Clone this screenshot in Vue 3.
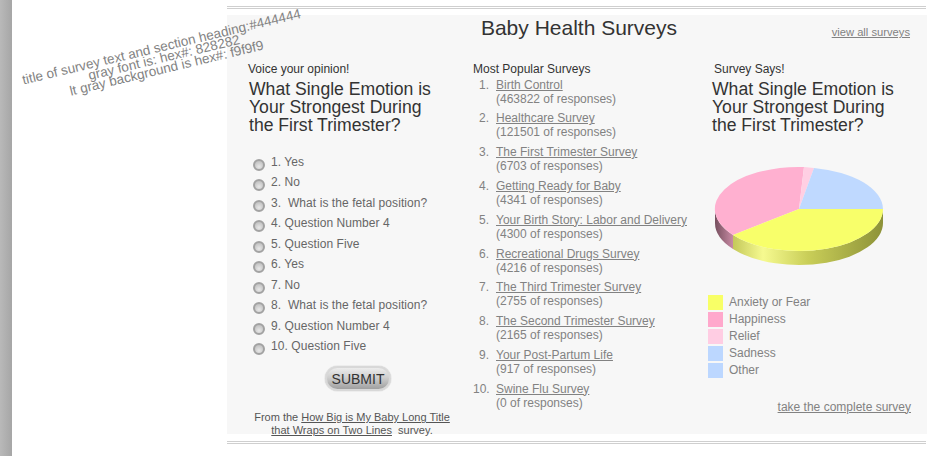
<script setup>
const questions = ['1. Yes', '2. No', '3. \u00a0What is the fetal position?', '4. Question Number 4', '5. Question Five', '6. Yes', '7. No', '8. \u00a0What is the fetal position?', '9. Question Number 4', '10. Question Five']
const surveys = [
  ['Birth Control', 463822], ['Healthcare Survey', 121501], ['The First Trimester Survey', 6703],
  ['Getting Ready for Baby', 4341], ['Your Birth Story: Labor and Delivery', 4300], ['Recreational Drugs Survey', 4216],
  ['The Third Trimester Survey', 2755], ['The Second Trimester Survey', 2165], ['Your Post-Partum Life', 917], ['Swine Flu Survey', 0]
]
const legend = [['Anxiety or Fear', '#f8ff66'], ['Happiness', '#ffa8cc'], ['Relief', '#ffcde3'], ['Sadness', '#bcd7ff'], ['Other', '#bcd7ff']]
</script>

<template>
  <div class="page">
    <div class="strip"></div>
    <div class="note">title of survey text and section heading:#444444<br>gray font is: hex#: 828282<br>lt gray background is hex#: f9f9f9</div>
    <div class="main">
      <div class="rule top"></div>
      <div class="panel">
        <header class="head">
          <h1>Baby Health Surveys</h1>
          <a class="all">view all surveys</a>
        </header>
        <div class="cols">
          <section class="vote">
            <p class="label">Voice your opinion!</p>
            <h2>What Single Emotion is Your Strongest During the First Trimester?</h2>
            <ul class="qs">
              <li v-for="q in questions" :key="q"><span class="radio"></span><span>{{ q }}</span></li>
            </ul>
            <button class="submit">SUBMIT</button>
            <p class="from">From the <a>How Big is My Baby Long Title<br>that Wraps on Two Lines</a>&nbsp; survey.</p>
          </section>
          <section class="popular">
            <p class="label">Most Popular Surveys</p>
            <ol>
              <li v-for="(s, i) in surveys" :key="s[0]">
                <span class="num">{{ i + 1 }}.</span>
                <div><a>{{ s[0] }}</a><br>({{ s[1] }} of responses)</div>
              </li>
            </ol>
          </section>
          <section class="says">
            <p class="label shift">Survey Says!</p>
            <h2>What Single Emotion is Your Strongest During the First Trimester?</h2>
            <svg class="pie" width="190" height="112" viewBox="708 160 190 112">
              <defs>
                <linearGradient id="wallY" x1="733" x2="883" y1="0" y2="0" gradientUnits="userSpaceOnUse">
                  <stop offset="0" stop-color="#c4c85a"/>
                  <stop offset="0.2" stop-color="#f6fa90"/>
                  <stop offset="0.5" stop-color="#c9ce58"/>
                  <stop offset="1" stop-color="#8d9238"/>
                </linearGradient>
                <linearGradient id="wallP" x1="715" x2="733" y1="0" y2="0" gradientUnits="userSpaceOnUse">
                  <stop offset="0" stop-color="#77505f"/>
                  <stop offset="1" stop-color="#c88aa4"/>
                </linearGradient>
              </defs>
              <path d="M715 209 A84 42 0 0 0 733 235 L733 249 A84 42 0 0 1 715 223Z" fill="url(#wallP)"/>
              <path d="M733 235 A84 42 0 0 0 883 209 L883 223 A84 42 0 0 1 733 249Z" fill="url(#wallY)"/>
              <path d="M799 209 L733 235 A84 42 0 0 1 804 167Z" fill="#ffb0d0"/>
              <path d="M799 209 L804 167 A84 42 0 0 1 814 168Z" fill="#ffcfe3"/>
              <path d="M799 209 L814 168 A84 42 0 0 1 883 209Z" fill="#bfd9ff"/>
              <path d="M799 209 L883 209 A84 42 0 0 1 733 235Z" fill="#f8ff6a"/>
            </svg>
            <ul class="legend">
              <li v-for="l in legend" :key="l[0]"><span class="swatch" :style="{ background: l[1] }"></span>{{ l[0] }}</li>
            </ul>
            <a class="take">take the complete survey</a>
          </section>
        </div>
      </div>
      <div class="rule bottom"></div>
    </div>
  </div>
</template>

<style>
html, body { margin: 0; background: #fff; overflow: hidden; }
</style>

<style scoped>
.page {
  position: relative;
  display: flex;
  width: 936px;
  height: 456px;
  overflow: hidden;
  font-family: "Liberation Sans", Arial, sans-serif;
  font-size: 12px;
  color: #828282;
}
.strip {
  width: 12px;
  flex: none;
  background: linear-gradient(90deg, #b9b9b9, #a6a6a6);
}
.note {
  position: absolute;
  left: 4px;
  top: 41px;
  width: 320px;
  font-size: 13.5px;
  line-height: 11px;
  text-align: center;
  color: #828282;
  transform: rotate(-13.5deg);
}
.main {
  width: 699px;
  margin-left: 215px;
  padding-top: 6px;
}
.rule {
  height: 1px;
  border-top: 1px solid #cfcfcf;
  border-bottom: 1px solid #cfcfcf;
}
.rule.top { margin-bottom: 6px; }
.rule.bottom { margin-top: 7px; }
.panel {
  height: 419px;
  width: 700px;
  background: #f7f7f7;
  box-sizing: border-box;
  padding-left: 21px;
}
.head {
  position: relative;
  height: 47px;
  margin-left: -21px;
}
h1 {
  margin: 0;
  font-size: 21px;
  line-height: 26px;
  font-weight: 400;
  color: #333;
  text-align: center;
  width: 704px;
}
a { text-decoration: underline; color: #828282; }
.all {
  position: absolute;
  right: 17px;
  top: 10px;
  font-size: 11.2px;
  line-height: 14px;
}
.cols {
  display: grid;
  grid-template-columns: 225px 239px 1fr;
}
.label {
  margin: 0;
  font-size: 12px;
  line-height: 14px;
  color: #333;
}
.label.shift { margin-left: 2px; }
h2 {
  margin: 4px 0 0;
  width: 195px;
  font-size: 17.6px;
  line-height: 18px;
  font-weight: 400;
  color: #333;
}
.vote h2 { margin-left: 1px; }
.qs {
  list-style: none;
  margin: 18px 0 0;
  padding: 0;
}
.qs li {
  display: flex;
  gap: 6px;
  align-items: flex-start;
  height: 20.44px;
  line-height: 20px;
  letter-spacing: 0.07px;
  color: #666;
}
.radio {
  flex: none;
  width: 8px;
  height: 8px;
  margin: 7px 0 0 5px;
  border: 2px solid #a2a2a2;
  border-radius: 50%;
  background: radial-gradient(circle at 50% 70%, #e8e8e8, #b8b8b8);
}
.submit {
  display: block;
  width: 66px;
  height: 25px;
  margin: 10px 0 0 77px;
  padding: 0;
  border: 2px solid #d8d8d8;
  border-radius: 13px;
  background: linear-gradient(#ececec, #cfcfcf 45%, #a0a0a0);
  box-shadow: 0 0 1px #999;
  font: 14px/20px "Liberation Sans", Arial, sans-serif;
  color: #333;
}
.from {
  margin: 20px 0 0;
  width: 208px;
  font-size: 11px;
  line-height: 13px;
  text-align: center;
  color: #555;
}
.from a { color: #555; }
.popular ol {
  list-style: none;
  margin: 1.6px 0 0;
  padding: 0;
}
.popular li {
  display: flex;
  height: 33.8px;
  line-height: 14px;
  color: #828282;
}
.num {
  width: 16px;
  flex: none;
  margin-right: 7px;
  text-align: right;
}
.pie {
  display: block;
  margin: 25.5px 0 0 -4px;
}
.legend {
  list-style: none;
  margin: 22px 0 0 -4px;
  padding: 0;
}
.legend li {
  display: flex;
  align-items: center;
  gap: 6px;
  height: 17px;
  line-height: 15px;
}
.swatch {
  width: 15px;
  height: 15px;
  flex: none;
}
.take {
  display: block;
  margin-top: 21px;
  width: 199px;
  text-align: right;
  font-size: 12px;
  line-height: 14px;
}
</style>
